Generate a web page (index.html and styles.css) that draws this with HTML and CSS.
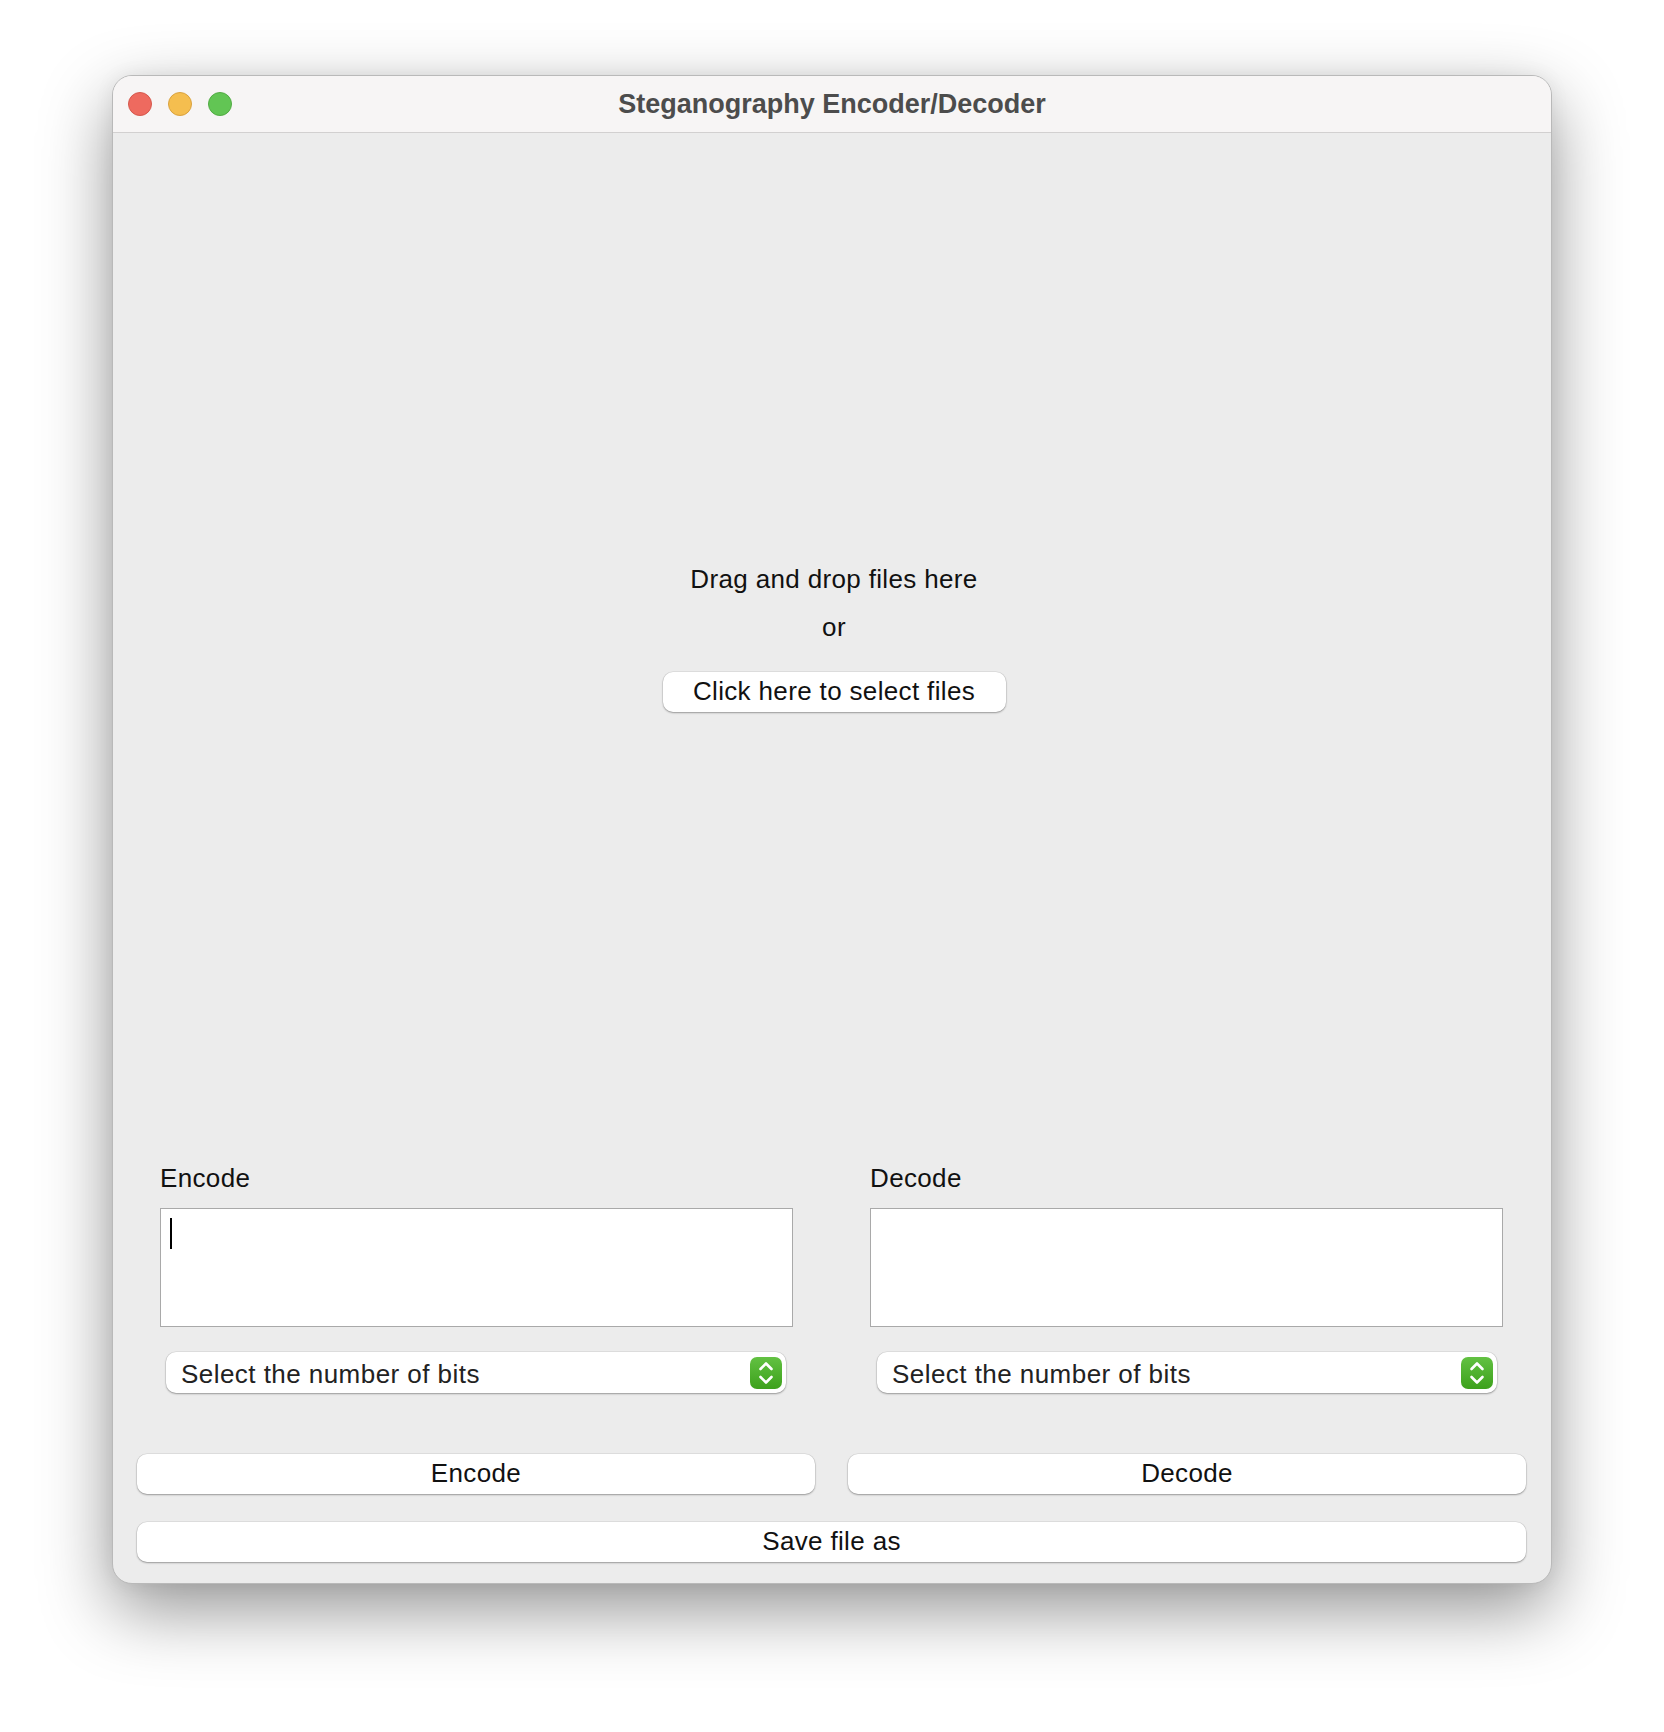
FILE: index.html
```html
<!DOCTYPE html>
<html lang="en">
<head>
<meta charset="utf-8">
<title>Steganography Encoder/Decoder</title>
<link rel="stylesheet" href="styles.css">
</head>
<body>
<div class="window">
  <div class="titlebar">
    <div class="lights">
      <span class="light red"></span>
      <span class="light yellow"></span>
      <span class="light green"></span>
    </div>
    <div class="title">Steganography Encoder/Decoder</div>
    <div></div>
  </div>
  <div class="content">
    <div class="dropzone">
      <div class="drop-line">Drag and drop files here</div>
      <div class="drop-line">or</div>
      <button class="btn btn-select">Click here to select files</button>
    </div>
    <div class="bottom">
      <div class="sections">
        <div class="section">
          <div class="label">Encode</div>
          <div class="textbox"><span class="caret"></span></div>
          <div class="popup">
            <span class="popup-text">Select the number of bits</span>
            <span class="stepper">
              <svg width="32" height="32" viewBox="0 0 32 32"><path d="M10.5 12 L16 6.5 L21.5 12 M10.5 20 L16 25.5 L21.5 20" fill="none" stroke="#fff" stroke-width="2.6" stroke-linecap="round" stroke-linejoin="round"/></svg>
            </span>
          </div>
        </div>
        <div class="section">
          <div class="label">Decode</div>
          <div class="textbox"></div>
          <div class="popup">
            <span class="popup-text">Select the number of bits</span>
            <span class="stepper">
              <svg width="32" height="32" viewBox="0 0 32 32"><path d="M10.5 12 L16 6.5 L21.5 12 M10.5 20 L16 25.5 L21.5 20" fill="none" stroke="#fff" stroke-width="2.6" stroke-linecap="round" stroke-linejoin="round"/></svg>
            </span>
          </div>
        </div>
      </div>
      <div class="actions">
        <button class="btn">Encode</button>
        <button class="btn">Decode</button>
      </div>
      <button class="btn btn-save">Save file as</button>
    </div>
  </div>
</div>
</body>
</html>
```
FILE: styles.css
```css
* { box-sizing: border-box; }
html, body { margin: 0; padding: 0; background: #ffffff; }
body {
  width: 1664px;
  height: 1732px;
  padding-top: 75px;
  font-family: "Liberation Sans", Arial, sans-serif;
  font-size: 26px;
  letter-spacing: 0.35px;
  color: #111;
  overflow: hidden;
}
.window {
  width: 1440px;
  height: 1509px;
  margin: 0 auto;
  border: 1px solid #b9b9b9;
  border-radius: 20px;
  background: #ececec;
  box-shadow: 0 26px 70px rgba(0,0,0,0.42), 0 0 20px rgba(0,0,0,0.06);
  overflow: hidden;
  display: flex;
  flex-direction: column;
}
.titlebar {
  height: 57px;
  flex: none;
  background: #f7f5f5;
  border-bottom: 1px solid #d2d0d0;
  display: grid;
  grid-template-columns: 1fr auto 1fr;
  align-items: center;
}
.lights {
  display: flex;
  gap: 16px;
  padding-left: 15px;
}
.light {
  width: 24px;
  height: 24px;
  border-radius: 50%;
  display: block;
}
.red { background: #ee6a5f; border: 1px solid #d5584d; }
.yellow { background: #f5be4f; border: 1px solid #d9a23f; }
.green { background: #62c554; border: 1px solid #52ab44; }
.title {
  font-weight: bold;
  font-size: 27px;
  letter-spacing: 0;
  color: #4c4c4c;
  padding-top: 0;
}
.content {
  flex: 1;
  display: flex;
  flex-direction: column;
}
.dropzone {
  flex: 1;
  display: flex;
  flex-direction: column;
  align-items: center;
  padding-top: 422px;
  padding-left: 4px;
}
.drop-line {
  line-height: 48px;
  height: 48px;
  color: #111;
}
.btn {
  font-family: inherit;
  font-size: 26px;
  letter-spacing: 0.35px;
  color: #111;
  background: #ffffff;
  border: none;
  border-radius: 10px;
  height: 40px;
  line-height: 38px;
  padding: 0 0 2px;
  box-shadow: 0 1px 2px rgba(0,0,0,0.32), 0 0 0 0.5px rgba(0,0,0,0.1);
  display: block;
}
.btn-select {
  margin-top: 21px;
  width: 343px;
}
.bottom {
  padding: 0 25px 21px 24px;
}
.sections {
  display: grid;
  grid-template-columns: 678px 678px;
  column-gap: 33px;
}
.section {
  display: flex;
  flex-direction: column;
}
.label {
  margin-left: 23px;
  line-height: 32px;
  height: 32px;
  color: #111;
}
.section + .section .label,
.section + .section .textbox { margin-left: 22px; }
.textbox {
  margin-top: 14px;
  margin-left: 23px;
  width: 633px;
  height: 119px;
  background: #fff;
  border: 1px solid #a9a9a9;
  position: relative;
}
.caret {
  position: absolute;
  left: 9px;
  top: 9px;
  width: 2px;
  height: 31px;
  background: #000;
}
.popup {
  margin-top: 25px;
  margin-left: 29px;
  width: 620px;
  height: 41px;
  background: #fff;
  border-radius: 10px;
  box-shadow: 0 1px 2px rgba(0,0,0,0.32), 0 0 0 0.5px rgba(0,0,0,0.1);
  display: flex;
  align-items: center;
  justify-content: space-between;
  padding: 0 4px 0 15px;
}
.popup-text {
  color: #222;
  letter-spacing: 0.45px;
  padding-top: 4px;
}
.stepper {
  width: 32px;
  height: 32px;
  border-radius: 7px;
  background: linear-gradient(#62c142, #3da11c);
  display: block;
}
.stepper svg { display: block; }
.actions {
  margin-top: 61px;
  display: grid;
  grid-template-columns: 678px 678px;
  column-gap: 33px;
}
.actions .btn { width: 678px; }
.btn-save {
  margin-top: 28px;
  width: 1389px;
}
```
